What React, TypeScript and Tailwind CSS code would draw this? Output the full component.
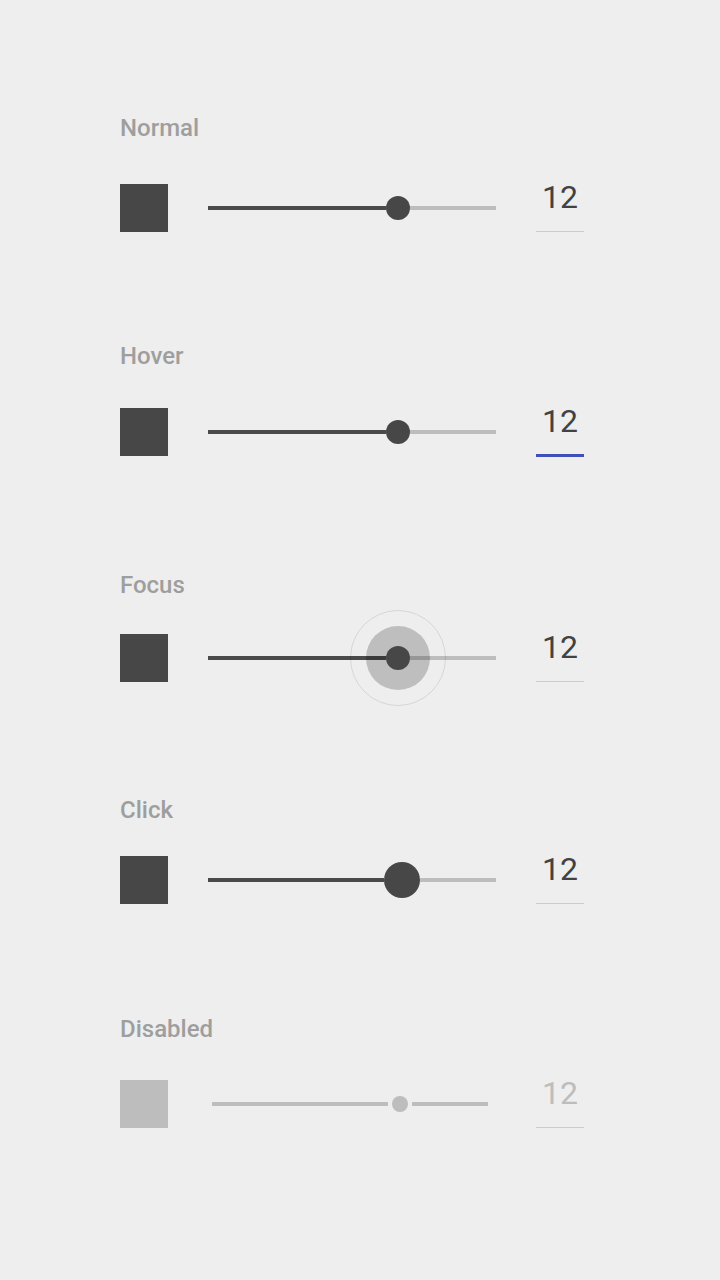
import React from "react";

type Variant = "normal" | "hover" | "focus" | "click" | "disabled";

type Section = {
  label: string;
  variant: Variant;
  top: string;
  gap: string;
};

const sections: Section[] = [
  { label: "Normal", variant: "normal", top: "pt-[112px]", gap: "mt-[40px]" },
  { label: "Hover", variant: "hover", top: "pt-[108px]", gap: "mt-[36px]" },
  { label: "Focus", variant: "focus", top: "pt-[113px]", gap: "mt-[33px]" },
  { label: "Click", variant: "click", top: "pt-[112px]", gap: "mt-[30px]" },
  { label: "Disabled", variant: "disabled", top: "pt-[109px]", gap: "mt-[35px]" },
];

const Slider = ({ variant }: { variant: Variant }) => {
  if (variant === "disabled") {
    return (
      <div className="w-[288px] h-12 flex items-center pl-1 pr-2 gap-1">
        <div className="w-[176px] h-1 bg-[#bdbdbd]" />
        <div className="w-4 h-4 rounded-full bg-[#bdbdbd]" />
        <div className="flex-1 h-1 bg-[#bdbdbd]" />
      </div>
    );
  }

  const isClick = variant === "click";

  return (
    <div className="w-[288px] h-12 flex items-center">
      <div className={`h-1 bg-[#4a4a4a] ${isClick ? "w-[176px]" : "w-[178px]"}`} />
      <div className={`relative flex items-center justify-center ${isClick ? "w-9 h-9" : "w-6 h-6"}`}>
        {variant === "focus" && (
          <>
            <div className="absolute -inset-5 rounded-full bg-black/20" />
            <div className="absolute -inset-9 rounded-full border border-black/10" />
          </>
        )}
        <div className="relative w-full h-full rounded-full bg-[#474747]" />
      </div>
      <div className="flex-1 h-1 bg-[#bdbdbd]" />
    </div>
  );
};

const ValueField = ({ variant }: { variant: Variant }) => {
  const disabled = variant === "disabled";
  return (
    <div className="w-12 h-12 flex flex-col">
      <div
        className={`flex-1 text-center text-[32px] leading-[26px] ${
          disabled ? "text-[#bdbdbd]" : "text-[#424242]"
        }`}
      >
        12
      </div>
      {variant === "hover" ? (
        <div className="h-[3px] -mb-[1px] bg-[#3f51b5]" />
      ) : (
        <div className="h-px bg-[#cccccc]" />
      )}
    </div>
  );
};

const App = () => {
  return (
    <div
      className="w-[720px] h-[1280px] bg-[#eeeeee] pl-[120px] overflow-hidden"
      style={{ fontFamily: "Roboto, 'Noto Sans', sans-serif" }}
    >
      {sections.map((s) => (
        <section key={s.label} className={s.top}>
          <div className="text-[24px] leading-8 font-medium text-[#9e9e9e]">
            {s.label}
          </div>
          <div className={`${s.gap} flex items-center gap-10`}>
            <div
              className={`w-12 h-12 ${
                s.variant === "disabled" ? "bg-[#bdbdbd]" : "bg-[#474747]"
              }`}
            />
            <Slider variant={s.variant} />
            <ValueField variant={s.variant} />
          </div>
        </section>
      ))}
    </div>
  );
};

export default App;
